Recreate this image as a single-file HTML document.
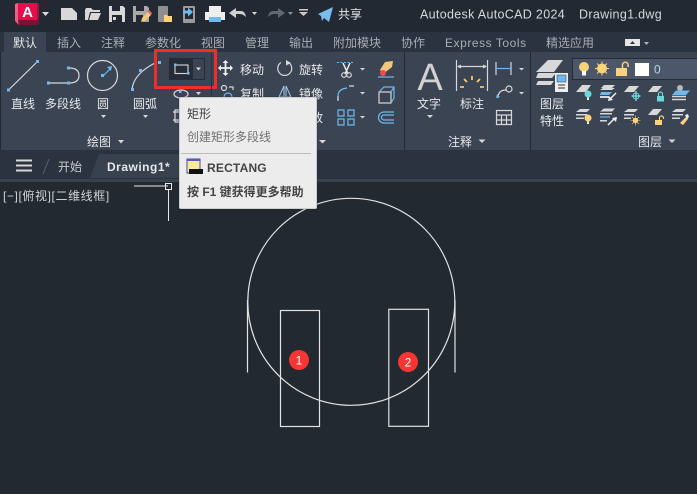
<!DOCTYPE html>
<html><head><meta charset="utf-8"><style>
html,body{margin:0;padding:0;width:697px;height:494px;overflow:hidden;background:#222931}
svg{display:block}
text{font-family:"Liberation Sans","Noto Sans CJK SC",sans-serif;font-size:12px;fill:#e6e8ea}
.t{fill:#a8aeb6;font-size:12px}
.c{text-anchor:middle}
.g{fill:#d8d8d8}
.w{fill:none;stroke:#d8d8d8;stroke-width:1.2}
.b{fill:none;stroke:#6fb9ee;stroke-width:1.2}
.k{fill:#6fb9ee}
.y{fill:#fcd27a}
.a{fill:#6fd6dc}
</style></head><body>
<svg width="697" height="494" viewBox="0 0 697 494" xmlns="http://www.w3.org/2000/svg">
<rect width="697" height="494" fill="#222931"/>
<rect y="0" width="697" height="32" fill="#222933"/>
<rect y="32" width="697" height="20" fill="#2b3340"/>
<rect x="4" y="32" width="42" height="20" fill="#3b4453"/>
<rect x="1" y="52" width="696" height="98" fill="#3b4453"/>
<rect y="150" width="697" height="29" fill="#2b3340"/>
<rect y="179" width="697" height="3" fill="#38414e"/>
<rect x="404" y="52" width="1" height="98" fill="#222933"/>
<rect x="530" y="52" width="1" height="98" fill="#222933"/>

<!-- logo -->
<path d="M15 4l3-1v17l1 5-4-4z" fill="#ee5f86"/>
<path d="M18 20h19l2-3v6l-2 2H19z" fill="#7b1330"/>
<rect x="18" y="3" width="19" height="17" fill="#e50d4a"/>
<path d="M37 3l2 1v14l-2 2z" fill="#a5123c"/>
<text x="27.500" y="17" class="c" style="font-size:15px;font-weight:bold;fill:#fff">A</text>
<polygon points="42,12 49,12 45.500,16" class="g"/>
<!-- QAT -->
<path d="M61 8h11l5 5v7H61z" class="g"/>
<path d="M85 20V10l1-2h5l2 2h7v2H90l-2 8z" class="g"/><path d="M89 20l2-7h10l-3 7z" class="g"/>
<path d="M109 6h14l2 2v14h-16z" class="g"/><rect x="112" y="6" width="8" height="5" fill="#222933"/><rect x="112" y="15" width="10" height="7" fill="#222933"/><rect x="113" y="17" width="3" height="3" class="g"/>
<path d="M133 6h14l2 2v14h-16z" fill="#a8a8a8"/><rect x="136" y="6" width="8" height="5" fill="#222933"/><rect x="136" y="15" width="7" height="7" fill="#222933"/>
<path d="M141 22l1-4 6-6 3 3-6 6z" fill="#f3c77a"/><path d="M147 11l2-1 3 3-1 2z" fill="#e8636b"/>
<rect x="158" y="6" width="10" height="16" rx="1" fill="#8f8f8f"/><path d="M164 15h3l1 1h4v6h-8z" class="y"/>
<rect x="183" y="6" width="12" height="17" rx="1" fill="#9a9a9a"/><rect x="185" y="8" width="8" height="11" fill="#222933"/><path d="M183 10.500h5v-3l5 4.500-5 4.500v-3h-5z" class="k"/>
<rect x="209" y="6" width="12" height="6" fill="#eee"/><path d="M205 12h20v8h-4v-3h-12v3h-4z" fill="#eee"/><rect x="209" y="17" width="12" height="5" fill="#6fb9ee"/>
<path d="M229 13l7-5v3h5q4 0 5 6q-3-3-6-3h-4v4z" fill="#d0d0d0"/>
<polygon points="252,12 257,12 254.500,15" class="g"/>
<path d="M285 13l-7-5v3h-5q-4 0-5 6q3-3 6-3h4v4z" fill="#616873"/>
<polygon points="288,12 293,12 290.500,15" fill="#8d939c"/>
<rect x="299" y="9" width="9" height="1.500" fill="#c8c8c8"/><polygon points="299,12 308,12 303.500,16" fill="#c8c8c8"/>
<path d="M318 14L333 7l-4 15-5-4-2 3-1-5z" fill="#79bdf0"/>
<text x="338" y="18.500">共享</text>
<text x="420" y="18.500" style="font-size:12.500px;letter-spacing:.32px;fill:#d5d8dc">Autodesk AutoCAD 2024</text>
<text x="579" y="18.500" style="font-size:12.500px;letter-spacing:.32px;fill:#d5d8dc">Drawing1.dwg</text>

<!-- tabs -->
<text x="13" y="47" style="fill:#e6e8ea">默认</text>
<text x="57" y="47" class="t">插入</text><text x="101" y="47" class="t">注释</text><text x="145" y="47" class="t">参数化</text>
<text x="201" y="47" class="t">视图</text><text x="245" y="47" class="t">管理</text><text x="289" y="47" class="t">输出</text>
<text x="333" y="47" class="t">附加模块</text><text x="401" y="47" class="t">协作</text>
<text x="445" y="47" class="t" style="letter-spacing:.55px">Express Tools</text><text x="546" y="47" class="t">精选应用</text>
<rect x="625" y="39" width="15" height="7" fill="#e6e6e6"/><polygon points="630,44 635,44 632.500,41" fill="#333"/>
<polygon points="644,42 649,42 646.500,45" fill="#b0b0b0"/>

<!-- draw panel -->
<path d="M8.500 90L37.500 61.500" class="w"/><rect x="7" y="88.500" width="3" height="3" class="k"/><rect x="36" y="60" width="3" height="3" class="k"/>
<path d="M49 83h20M69 68q10 0 10 7.500T69 83" class="w"/><rect x="47" y="81.500" width="3" height="3" class="k"/><rect x="67" y="81.500" width="3" height="3" class="k"/><rect x="67" y="66.500" width="3" height="3" class="k"/>
<circle cx="102.500" cy="75.500" r="15" class="w"/><path d="M103 76l7-7" class="b"/><polygon points="112,66 111,71 107,67" class="k"/><rect x="101" y="74" width="3" height="3" class="k"/>
<path d="M132 89q2-16 25-27" class="w"/><rect x="131" y="88" width="3" height="3" class="k"/><rect x="139" y="69" width="3" height="3" class="k"/><rect x="158" y="61" width="3" height="3" class="k"/>
<text x="11" y="108">直线</text><text x="45" y="108">多段线</text><text x="97" y="108">圆</text><text x="133" y="108">圆弧</text>
<polygon points="101,115 106,115 103.500,118" class="g"/><polygon points="143,115 148,115 145.500,118" class="g"/>
<text x="87" y="146">绘图</text><polygon points="118,140 124,140 121,143.500" class="g"/>
<rect x="169" y="58" width="36" height="22" fill="#252c37"/><rect x="193" y="59" width="11" height="20" fill="#3b4453"/>
<rect x="175" y="65" width="13" height="8.500" fill="none" stroke="#d8d8d8" stroke-width="1.100"/><rect x="174" y="63.500" width="2.500" height="2.500" class="k"/><rect x="187" y="72" width="2.500" height="2.500" class="k"/>
<polygon points="196,67.500 201,67.500 198.500,70.500" class="g"/>
<rect x="155.500" y="50.500" width="60" height="37" fill="none" stroke="#f02c2c" stroke-width="3"/>
<rect x="211" y="53" width="1" height="94" fill="#2b3340"/>
<ellipse cx="181" cy="94" rx="7" ry="4" class="w"/><rect x="179" y="90.500" width="2.500" height="2.500" class="k"/>
<polygon points="196,92 201,92 198.500,95" class="g"/>
<path d="M175 110h6v12h-6zM173 112h10M173 120h10" class="w"/>

<!-- modify -->
<path d="M225.500 61v14M219 68h13" stroke="#eee" stroke-width="1.800" fill="none"/><path d="M225.500 60l3 3h-6zM225.500 76l3-3h-6zM218 68l3-3v6zM233 68l-3-3v6z" fill="#eee"/>
<text x="240" y="74">移动</text>
<path d="M288.500 62.500a7 7 0 1 1-7.500 0" class="w"/><polygon points="286,60 291,63 286,65.500" class="g"/>
<text x="299" y="74">旋转</text>
<circle cx="224" cy="88" r="2.500" class="w"/><path d="M229 87h4v3" class="w"/><circle cx="228" cy="97" r="4" class="b"/>
<text x="240" y="98">复制</text>
<path d="M284 86l-5 11h5zM286 86l5 11h-5z" fill="none" stroke="#9ec9ee" stroke-width="1"/>
<text x="299" y="98">镜像</text>
<text x="299" y="122">缩放</text>
<polygon points="319,140 326,140 322.500,143.500" class="g"/>

<path d="M337 62.500h16" stroke="#6fb9ee" stroke-width="1" stroke-dasharray="2 1.500"/>
<path d="M343 63l5 11M350 63l-5 11" stroke="#eee" stroke-width="1.500"/><circle cx="344" cy="75" r="2.300" class="w"/><circle cx="349" cy="75" r="2.300" class="w"/>
<polygon points="360,68 365,68 362.500,70.500" class="g"/>
<path d="M338 100v-4q0-7 9-8" class="b"/><path d="M338 96v5M349 86h5" class="w"/>
<polygon points="360,92 365,92 362.500,94.500" class="g"/>
<path d="M338 111h6v6h-6zM348 111h6v6h-6zM338 120h6v6h-6zM348 120h6v6h-6z" class="b" transform="translate(0 -1)"/>
<polygon points="360,116 365,116 362.500,118.500" class="g"/>
<path d="M385 62l8-1-1 6-9 7-3-4z" fill="#f3c77a"/><circle cx="383" cy="73" r="3" fill="#ee4b4b"/><path d="M378 77h16" class="b"/>
<rect x="379" y="92" width="12" height="11" class="w"/><path d="M379 92l5-5h10v11l-3 5M391 92l3-5" class="b"/>
<path d="M394 112h-10a5 5 0 0 0 0 11h10M394 115h-10a2.500 2.500 0 0 0 0 5h10" class="b"/>

<!-- annotation -->
<text x="430" y="90" class="c" style="font-size:38px;fill:#d2d2d2">A</text>
<text x="417" y="108">文字</text>
<polygon points="427,115 433,115 430,118" class="g"/>
<path d="M456.500 60v31M487.500 60v31M458 66.500h28" class="w"/><polygon points="457,66.500 461,64.500 461,68.500" class="g"/><polygon points="487,66.500 483,64.500 483,68.500" class="g"/>
<path d="M472 76v4M464 79l3 3M480 79l-3 3M460 87h4M480 87h4" stroke="#f5c96e" stroke-width="1.800"/>
<text x="460" y="108">标注</text>
<path d="M496 62v13M511 62v13" class="w"/><path d="M497 68.500h13" class="b"/>
<polygon points="519,68 524,68 521.500,70.500" class="g"/>
<circle cx="509" cy="89" r="3" class="w"/><path d="M506 90q-8 0-8 8" class="w"/><path d="M496 98l1-4 3 3z" class="k"/>
<polygon points="519,92 524,92 521.500,94.500" class="g"/>
<path d="M496.500 110.500h15v14h-15zM496.500 115h15M496.500 120h15M501.500 115v9.500M506.500 115v9.500" class="w"/>
<text x="448" y="146">注释</text><polygon points="478.500,139.500 485.500,139.500 482,143" class="g"/>

<!-- layers -->
<path d="M548 60h15l-9 12h-18z" class="g"/><path d="M552 68l-6 4 h-10l-0 0z" class="g" opacity="0"/>
<path d="M538 73h16l2 0-4 5h-16z" class="g"/><path d="M538 81h16l-3 4h-15z" class="g"/>
<rect x="555" y="73" width="13" height="19" fill="#eee"/><rect x="557" y="75" width="9" height="7" fill="#6fb9ee" stroke="#333" stroke-width=".5"/><path d="M558 85h7M558 88h7" stroke="#333"/>
<text x="540" y="108">图层</text><text x="540" y="125">特性</text>

<rect x="572.500" y="58.500" width="130" height="21" fill="#4c5869" stroke="#252c37"/>
<circle cx="584" cy="67" r="5" class="y"/><rect x="582" y="71" width="4" height="4.500" fill="#fff"/>
<path d="M595 68.500h14M602 61.500v14M597 63.500l10 10M607 63.500l-10 10" stroke="#fcd27a" stroke-width="1"/><circle cx="602" cy="68.500" r="5" class="y"/>
<rect x="616" y="68" width="11" height="8" class="y"/><path d="M622.500 68v-3a2.800 2.800 0 0 1 5.600 0v2" stroke="#fcd27a" stroke-width="1.500" fill="none"/>
<rect x="635" y="63" width="14" height="13" fill="#fff"/>
<text x="654" y="73.500" style="fill:#b9d4ee;font-size:12px">0</text>

<!-- row 1 -->
<path d="M582 85h9l-5 7h-10z" class="g"/><circle cx="588" cy="94" r="3.500" class="a"/><rect x="587" y="97.500" width="2" height="2.500" fill="#eee"/>
<path d="M604 85h11l-3 3 3 0-3 2h-12l3-2h-2z" class="g"/><path d="M601 92h11l-3 3h-9z" class="k"/><path d="M600 96h9v2h-9z" class="g"/><path d="M616 93l-6 6" stroke="#eee" stroke-width="1.500"/><path d="M608 101l1-5 4 4z" fill="#eee"/>
<path d="M629 86h10l-5 6h-10z" class="g"/><path d="M636 91v10M631.500 96h9" stroke="#6fd6dc" stroke-width="1.400"/><circle cx="636" cy="96" r="3" fill="none" stroke="#6fd6dc"/>
<path d="M653 86h9l-5 6h-9z" class="g"/><rect x="657" y="96" width="7" height="5.500" class="a"/><path d="M658.500 96v-2a2 2 0 0 1 4 0v2" stroke="#6fd6dc" fill="none" stroke-width="1.200"/>
<circle cx="680" cy="88" r="3" fill="#b8b8b8"/><path d="M676 90.500h14l-4 4.500h-14z" class="k"/><path d="M672 96.500h14M672 99.500h14" stroke="#d8d8d8" stroke-width="1.500"/>
<!-- row 2 -->
<path d="M580 109h10l-3 3h-11zM576 114h11v1.500h-11zM576 117.500h8v1.500h-8z" class="g"/><circle cx="588" cy="118" r="3.500" class="y"/><rect x="587" y="121.500" width="2" height="2.500" fill="#eee"/>
<path d="M604 108.500h11l-3 3h-12zM600 113h12v1.500h-12z" class="g"/><path d="M600 117h10" class="b"/><path d="M600 120h7v1.500h-7z" class="g"/><path d="M608 125l6-6" stroke="#eee" stroke-width="1.500"/><path d="M617 117l-1 5-4-4z" fill="#eee"/>
<path d="M628 109h10l-3 3h-11zM624 114h10v1.500h-10zM624 117.500h7v1.500h-7z" class="g"/><circle cx="635.500" cy="120.500" r="2.700" class="y"/><path d="M630.500 120.500h10M635.500 115.500v10M632 117l7 7M639 117l-7 7" stroke="#fcd27a" stroke-width=".6"/>
<path d="M653 109h9l-5 6h-9z" class="g"/><rect x="655" y="120" width="7" height="5" class="y"/><path d="M659.500 120v-2a2 2 0 0 1 4 0v1" stroke="#fcd27a" fill="none" stroke-width="1.200"/>
<path d="M676 109h10l-3 3h-11zM672 114h11v1.500h-11zM672 117.500h8v1.500h-8z" class="g"/><path d="M680 123l6-6 2 2-5 6z" class="y"/><path d="M685 115l3-1 1 3-2 2z" fill="#eee"/>
<text x="638" y="146">图层</text><polygon points="668.500,139.500 675.500,139.500 672,143" class="g"/>

<!-- tab strip -->
<path d="M16 160.500h16M16 165.500h16M16 170.500h16" stroke="#d8d8d8" stroke-width="2"/>
<path d="M43 174l6-15" stroke="#59606c"/>
<text x="58" y="171" style="fill:#c8ccd0">开始</text>
<path d="M90 178l9-24h90v24z" fill="#38414e"/>
<text x="107" y="171" style="font-weight:bold;font-size:12px;letter-spacing:.5px;fill:#e6e8ea">Drawing1*</text>

<!-- canvas -->
<text x="3" y="200" style="font-size:12px;letter-spacing:.6px;fill:#d0d3d6">[−][俯视][二维线框]</text>
<path d="M134 186h34M168.500 189v32" stroke="#e8e8e8" stroke-width="1"/><rect x="165.500" y="183.500" width="6" height="6" fill="none" stroke="#e8e8e8"/>

<circle cx="351.300" cy="301.800" r="103.500" fill="none" stroke="#e2e2e2" stroke-width="1.200"/>
<path d="M247.500 300v72.500M455 300v72.500" stroke="#e2e2e2" stroke-width="1.200"/>
<rect x="280.500" y="310.500" width="39" height="116" fill="none" stroke="#e2e2e2" stroke-width="1.200"/>
<rect x="388.800" y="309.300" width="39.700" height="117" fill="none" stroke="#e2e2e2" stroke-width="1.200"/>
<circle cx="299" cy="360" r="10" fill="#f63535"/><text x="299" y="364.500" class="c" style="fill:#fff;font-size:12px">1</text>
<circle cx="408" cy="362" r="10" fill="#f63535"/><text x="408" y="366.500" class="c" style="fill:#fff;font-size:12px">2</text>

<!-- tooltip -->
<rect x="179" y="97" width="138" height="112" rx="1.500" fill="#ececec" stroke="#1a1f26" stroke-opacity=".3"/>
<text x="187" y="118" style="fill:#3c3c3c">矩形</text>
<text x="187" y="141" style="fill:#707070">创建矩形多段线</text>
<rect x="181" y="153" width="130" height="1" fill="#bdbdbd"/>
<rect x="187" y="159" width="13" height="14" fill="#f5ec9a" stroke="#4a4aa8"/><rect x="187" y="159" width="13" height="2" fill="#5a5ab8"/><rect x="189" y="169" width="14" height="5" fill="#111"/>
<text x="207" y="172" style="font-weight:bold;fill:#444;font-size:12px;letter-spacing:.2px">RECTANG</text>
<text x="187" y="196" style="font-weight:bold;fill:#444;font-size:12px">按 F1 键获得更多帮助</text>
</svg>
</body></html>
